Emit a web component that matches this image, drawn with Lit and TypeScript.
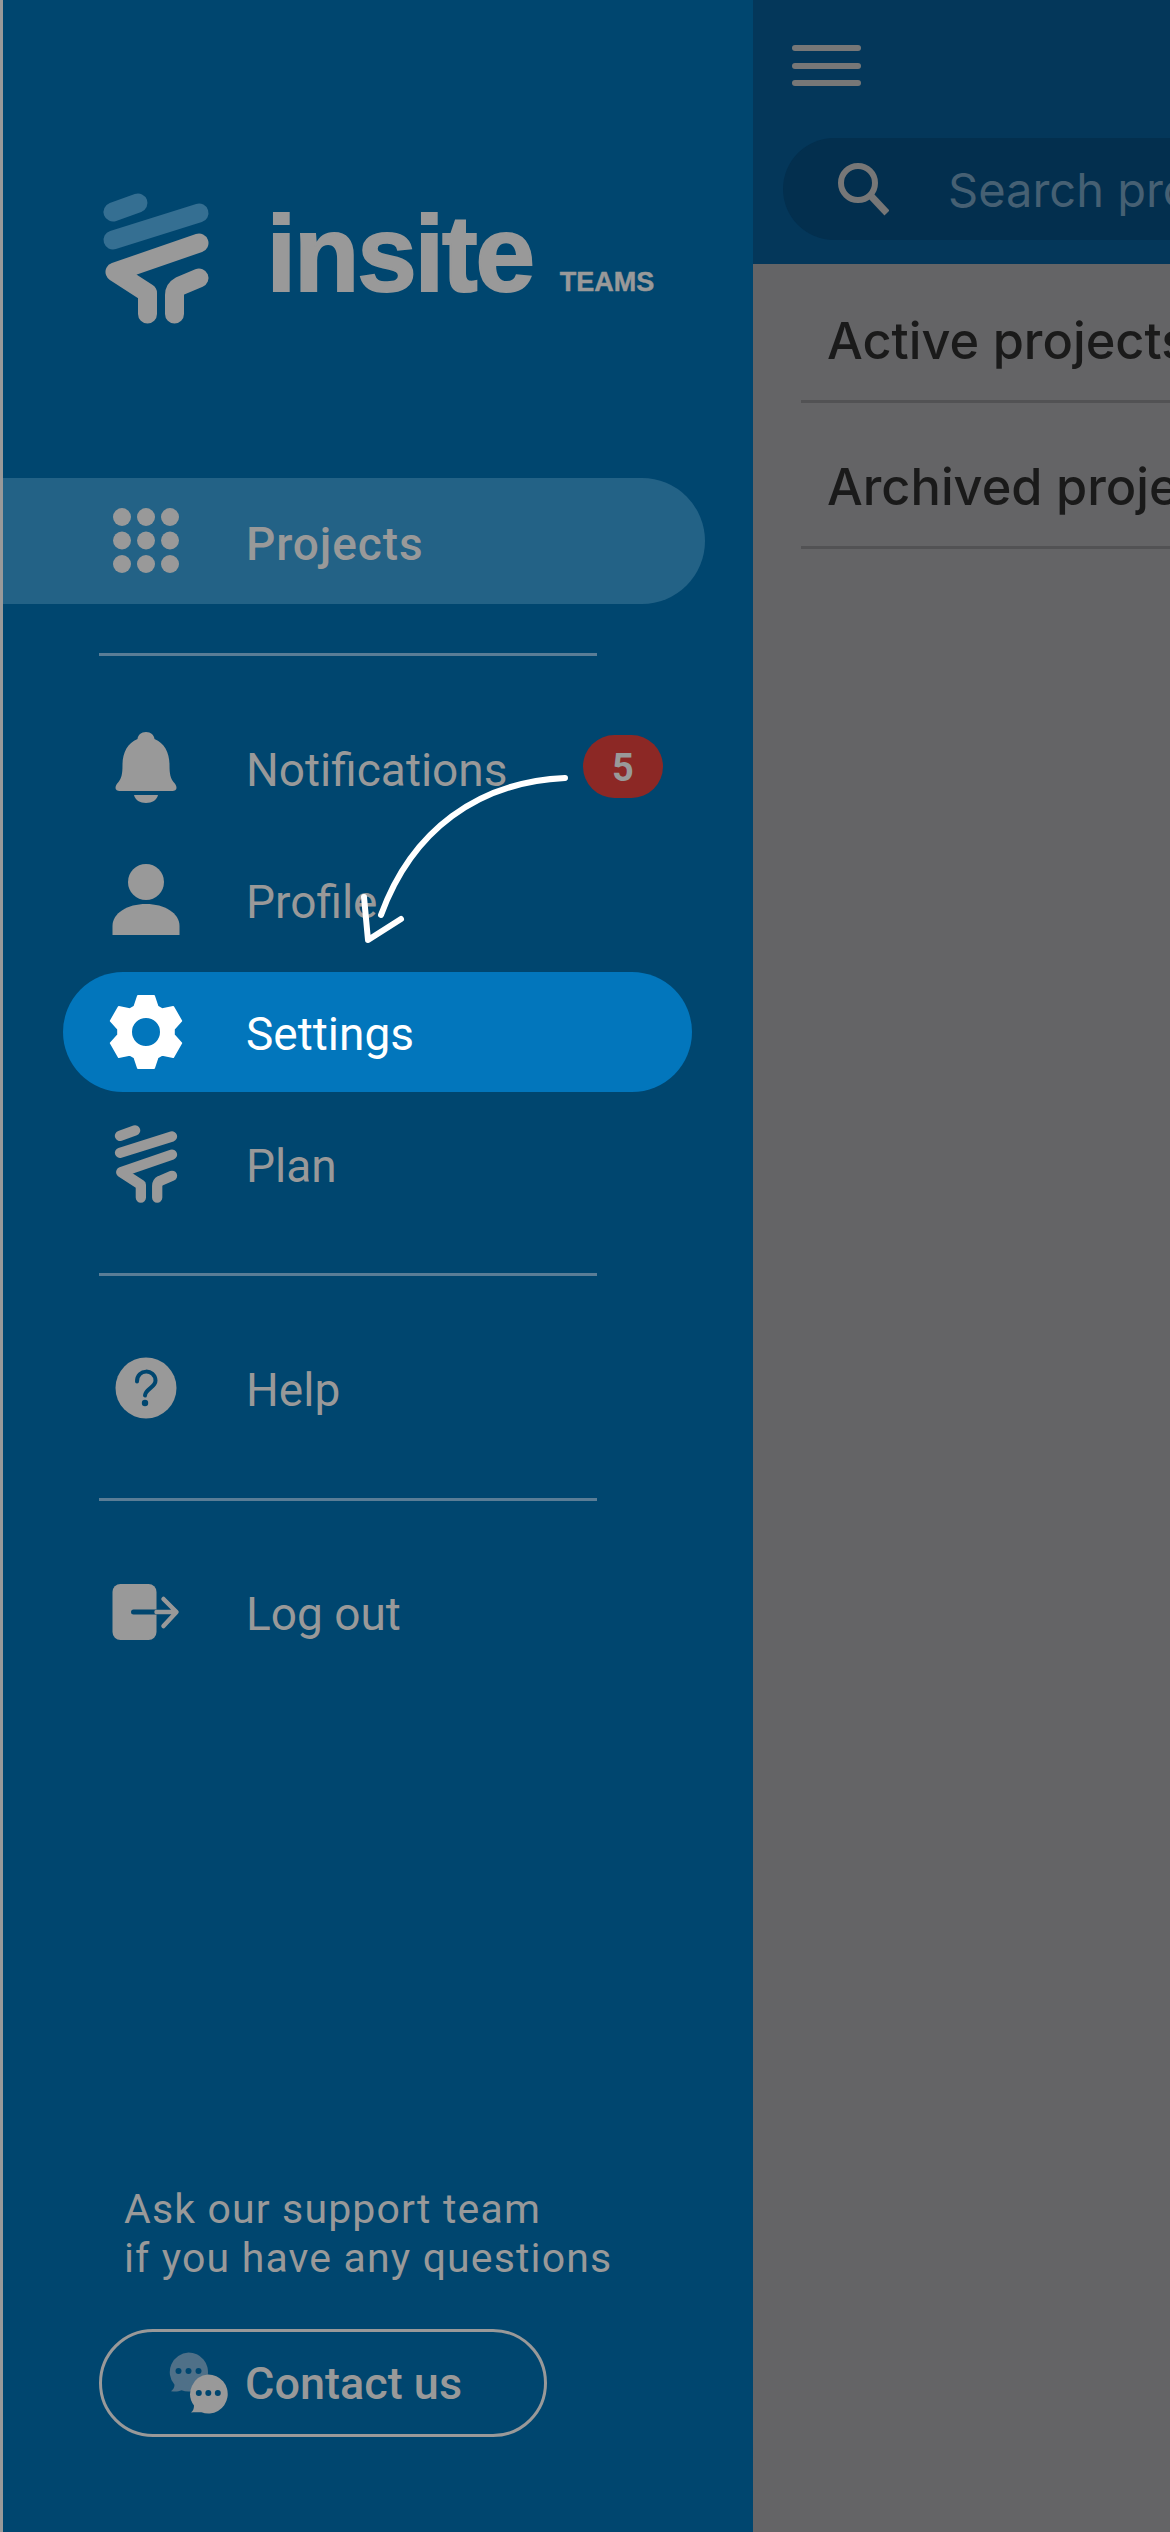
import { LitElement, html, svg, css } from 'lit';
import { customElement } from 'lit/decorators.js';

// The icon paths are written in page coordinates and cropped by their viewBox.
const GRAY = '#999999';
const SIDEBAR = '#00466f';

const logoMark = (topColor: string, width: number) => svg`
  <g fill="none" stroke-linecap="round" stroke-linejoin="round" stroke-width=${width}>
    <path d="M113 212 L138 203" stroke=${topColor} />
    <path d="M113 240 L199 213" stroke=${topColor} />
    <path d="M199 243 L115 272 L147.5 293 V314" stroke=${GRAY} />
    <path d="M199 278 L180 286 Q174.5 289 174.5 295 V314" stroke=${GRAY} />
  </g>
`;

const gearPath = (cx: number, cy: number) => {
  let d = '';
  for (let i = 0; i < 6; i++) {
    const a = (i * Math.PI) / 3;
    const pt = (r: number, t: number) =>
      `${(cx + r * Math.sin(a) + t * Math.cos(a)).toFixed(1)} ${(cy - r * Math.cos(a) + t * Math.sin(a)).toFixed(1)}`;
    d += `${i ? 'L' : 'M'}${pt(25.5, -11.5)} L${pt(36, -8)} L${pt(36, 8)} L${pt(25.5, 11.5)} `;
  }
  return `${d}Z M${cx - 15} ${cy} a15 15 0 1 0 30 0 a15 15 0 1 0 -30 0 Z`;
};

const icon = (box: string, body: unknown) => html`<svg class="icon" viewBox=${box}>${body}</svg>`;

const icons: Record<string, () => unknown> = {
  projects: () =>
    icon('105.5 502 80 80', [121.5, 145.5, 169.5].flatMap((x) =>
      [518, 541.5, 565].map((y) => svg`<circle cx=${x} cy=${y} r="9" fill=${GRAY} />`)
    )),
  bell: () =>
    icon('105.5 727 80 80', svg`
      <path fill=${GRAY} d="M145.5 731 c-5 0 -8 3 -8.5 7 C127 742 122 752 122 764 c0 9 -1 13 -4 17 c-2 2 -3 4 -3 6 c0 2 2 3 4 3 h53 c2 0 4 -1 4 -3 c0 -2 -1 -4 -3 -6 c-3 -4 -4 -8 -4 -17 C169 752 164 742 154 738 c-.5 -4 -3.5 -7 -8.5 -7 z" />
      <path fill=${GRAY} d="M133.5 794 h24 c-1 5 -6 8 -12 8 s-11 -3 -12 -8 z" />
    `),
  profile: () =>
    icon('105.5 859 80 80', svg`
      <ellipse cx="145.5" cy="881" rx="18" ry="18" fill=${GRAY} />
      <path fill=${GRAY} d="M112 934 V925 c0 -13 15 -22 33.5 -22 s33.5 9 33.5 22 v9 z" />
    `),
  gear: () =>
    icon('105.5 991 80 80', svg`
      <path fill="#fff" fill-rule="evenodd" stroke="#fff" stroke-width="2" stroke-linejoin="round" d=${gearPath(145.5, 1031)} />
    `),
  plan: () =>
    icon('105.5 1123 80 80', svg`
      <g transform="translate(145.5 1163) scale(.605) translate(-156 -258.5)">${logoMark(GRAY, 17)}</g>
    `),
  help: () =>
    icon('105.5 1347.5 80 80', svg`
      <circle cx="145.5" cy="1387.5" r="30.5" fill=${GRAY} />
      <path fill="none" stroke=${SIDEBAR} stroke-width="4" stroke-linecap="round" d="M136.5 1381 c0 -13 18 -13 18.5 -1 c.2 7 -10 8 -10.5 15" />
      <circle cx="144.5" cy="1402.5" r="3.2" fill=${SIDEBAR} />
    `),
  logout: () =>
    icon('105.5 1573 80 80', svg`
      <rect x="112" y="1585" width="44" height="56" rx="8" fill=${GRAY} />
      <path d="M133 1613 H156" stroke=${SIDEBAR} stroke-width="5" stroke-linecap="round" fill="none" />
      <path d="M156 1613 H175 M163 1600 L176 1613 L163 1627" stroke=${GRAY} stroke-width="4.5" stroke-linecap="round" stroke-linejoin="round" fill="none" />
    `)
};

const groups = [
  [
    { label: 'Notifications', icon: 'bell', badge: '5' },
    { label: 'Profile', icon: 'profile' },
    { label: 'Settings', icon: 'gear', active: true },
    { label: 'Plan', icon: 'plan' }
  ],
  [{ label: 'Help', icon: 'help' }],
  [{ label: 'Log out', icon: 'logout' }]
];

@customElement('app-root')
export class AppRoot extends LitElement {
  static styles = css`
    :host {
      display: flex;
      position: relative;
      width: 1170px;
      height: 2532px;
      overflow: hidden;
      background: #646466;
      font-family: Roboto, sans-serif;
    }

    .sidebar {
      display: flex;
      flex-direction: column;
      flex: none;
      width: 750px;
      height: 2532px;
      border-left: 3px solid #999;
      background: #00466f;
      color: #999;
    }

    .logo {
      display: flex;
      align-items: flex-start;
      height: 137px;
      padding: 190px 0 0 97px;
      margin-bottom: 151px;
    }

    .logo svg {
      flex: none;
      width: 112px;
      height: 137px;
    }

    .wordmark {
      display: flex;
      align-items: baseline;
      margin: 10.5px 0 0 54.5px;
      font-family: 'Liberation Sans', Arial, sans-serif;
      font-weight: 700;
      line-height: 1;
    }

    .wordmark b {
      font-size: 107px;
      letter-spacing: -2.2px;
      -webkit-text-stroke: 2px #999;
    }

    .wordmark small {
      margin-left: 27px;
      font-size: 27px;
      font-weight: 700;
      -webkit-text-stroke: 0.5px #999;
    }

    .row {
      display: flex;
      align-items: center;
      height: 120px;
      margin-left: 60px;
      width: 629px;
      padding-left: 42.5px;
      box-sizing: border-box;
      border-radius: 60px;
      font-size: 46px;
      font-weight: 400;
    }

    .row + .row {
      margin-top: 12px;
    }

    .row span {
      margin-left: 60.5px;
      padding-top: 3px;
    }

    .row.current {
      height: 126px;
      width: 702px;
      margin-left: 0;
      padding-left: 102.5px;
      border-radius: 0 63px 63px 0;
      background: #236286;
      font-weight: 500;
      letter-spacing: 0.9px;
    }

    .row.current span {
      padding-top: 6px;
    }

    .row.active {
      background: #0276bc;
      color: #fff;
    }

    .icon {
      flex: none;
      width: 80px;
      height: 80px;
    }

    .badge {
      display: flex;
      align-items: center;
      justify-content: center;
      width: 80px;
      height: 60px;
      padding-top: 3px;
      margin: -3px 29px 0 auto;
      border-radius: 32px;
      background: #8c2825;
      font-size: 38px;
      font-weight: 700;
    }

    .rule {
      flex: none;
      width: 498px;
      height: 3px;
      margin: 49px 0 52px 96px;
      background: #5a7d96;
    }

    .rule.low {
      margin: 50px 0 51px 96px;
    }

    .footer {
      margin-top: auto;
      padding: 0 0 95px 96px;
    }

    .footer p {
      margin: 0 0 46.5px 25px;
      font-size: 41px;
      line-height: 49px;
      font-weight: 400;
      letter-spacing: 1.15px;
    }

    .contact {
      display: flex;
      align-items: center;
      width: 448px;
      height: 108px;
      box-sizing: border-box;
      padding-left: 66px;
      border: 3px solid #999;
      border-radius: 54px;
      font-size: 45px;
      font-weight: 500;
    }

    .contact svg {
      flex: none;
      width: 62px;
      height: 62px;
      margin-right: 15px;
    }

    .main {
      flex: 1;
      min-width: 0;
    }

    .header {
      height: 264px;
      box-sizing: border-box;
      padding-top: 45px;
      background: #04375a;
    }

    .menu {
      display: flex;
      flex-direction: column;
      gap: 11.5px;
      width: 69px;
      margin-left: 39px;
    }

    .menu i {
      height: 6px;
      border-radius: 3px;
      background: #777;
    }

    .search {
      display: flex;
      align-items: center;
      width: 700px;
      height: 102px;
      margin: 52px 0 0 30px;
      padding-left: 54px;
      border-radius: 51px;
      background: #032f4e;
      font-family: Inter, sans-serif;
      font-size: 47px;
      color: #466073;
    }

    .search svg {
      flex: none;
      width: 52px;
      height: 54px;
      margin-right: 59px;
    }

    .item {
      margin-left: 48px;
      padding: 60px 0 35px 26px;
      border-bottom: 3px solid #525254;
      font-family: Inter, sans-serif;
      font-size: 50.5px;
      font-weight: 500;
      line-height: 48px;
      color: #1a1a1a;
      white-space: nowrap;
    }

    .item:first-of-type {
      padding-top: 53px;
    }

    .arrow {
      position: absolute;
      left: 0;
      top: 0;
      width: 1170px;
      height: 2532px;
      pointer-events: none;
    }
  `;

  renderRow(item: { label: string; icon: string; badge?: string; active?: boolean }) {
    return html`
      <div class="row ${item.active ? 'active' : ''}">
        ${icons[item.icon]()}
        <span>${item.label}</span>
        ${item.badge ? html`<div class="badge">${item.badge}</div>` : ''}
      </div>
    `;
  }

  render() {
    return html`
      <aside class="sidebar">
        <div class="logo">
          <svg viewBox="100 190 112 137">${logoMark('#356f92', 19)}</svg>
          <div class="wordmark"><b>insite</b><small>TEAMS</small></div>
        </div>

        <div class="row current">
          ${icons.projects()}
          <span>Projects</span>
        </div>
        <div class="rule"></div>

        ${groups.map(
          (group, i) => html`
            ${group.map((item) => this.renderRow(item))}
            ${i < groups.length - 1 ? html`<div class="rule ${i === 1 ? 'low' : ''}"></div>` : ''}
          `
        )}

        <div class="footer">
          <p>Ask our support team<br />if you have any questions</p>
          <div class="contact">
            <svg viewBox="167 2351 62 62">
              <path fill="#4f7088" d="M187.5 2351.5 a19.5 19.5 0 1 1 -7 37.7 c-3 1.5 -6.5 1.7 -10.5 1 c2.5 -2 3.5 -4 3.5 -6.5 a19.5 19.5 0 0 1 14 -32.2 z" />
              <path fill=${GRAY} d="M207 2373.5 a19.5 19.5 0 1 1 -6.5 37.8 c-3 -0 -7 0 -10.5 .2 c2.5 -2 3 -4.5 3 -7 a19.5 19.5 0 0 1 14 -31 z" />
              ${[177.5, 187.5, 197.5].map((x) => svg`<circle cx=${x} cy="2370" r="3" fill=${SIDEBAR} />`)}
              ${[197.8, 207.3, 216.8].map((x) => svg`<circle cx=${x} cy="2392" r="3" fill=${SIDEBAR} />`)}
            </svg>
            Contact us
          </div>
        </div>
      </aside>

      <main class="main">
        <header class="header">
          <div class="menu"><i></i><i></i><i></i></div>
          <div class="search">
            <svg viewBox="836 162 52 54">
              <circle cx="857" cy="183" r="17" fill="none" stroke="#777" stroke-width="6" />
              <path d="M870 196 L886 213" stroke="#777" stroke-width="7" fill="none" />
            </svg>
            Search projects
          </div>
        </header>
        <div class="item">Active projects</div>
        <div class="item">Archived projects</div>
      </main>

      <svg class="arrow" viewBox="0 0 1170 2532" fill="none" stroke="#fff" stroke-width="6" stroke-linecap="round" stroke-linejoin="round">
        <path d="M565 778 C478 782 412 830 381 915" />
        <path d="M364 897 L368 940 L401 919" />
      </svg>
    `;
  }
}
